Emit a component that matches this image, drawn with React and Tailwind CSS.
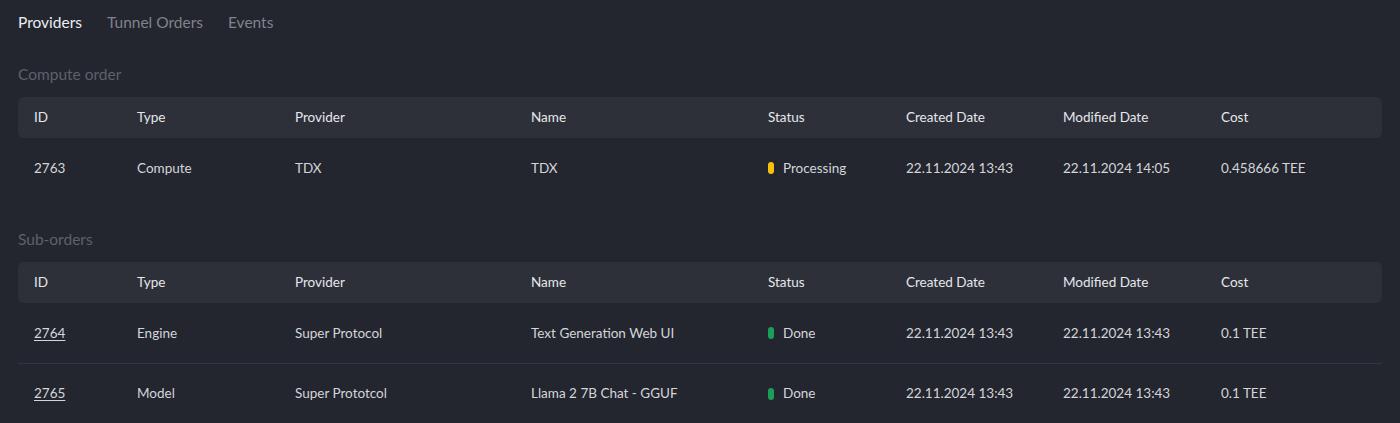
import React from "react";

const cols = ["w-[103px]", "w-[158px]", "w-[236px]", "w-[237px]", "w-[138px]", "w-[157px]", "w-[158px]", "flex-1"];
const heads = ["ID", "Type", "Provider", "Name", "Status", "Created Date", "Modified Date", "Cost"];

function Status({ color, label }) {
  return (
    <div className="flex items-center gap-[9px]">
      <span className={`inline-block w-[6px] h-[12px] rounded-full ${color}`} />
      <span>{label}</span>
    </div>
  );
}

function Header() {
  return (
    <div className="flex items-center h-[41px] bg-[#2d3039] rounded-[6px] pl-[16px] text-[13.5px] text-[#e6e7ea]">
      {heads.map((h, i) => (
        <div key={h} className={`${cols[i]} shrink-0`}>{h}</div>
      ))}
    </div>
  );
}

function Row({ cells, border }) {
  return (
    <div className={`flex items-center h-[60px] pl-[16px] text-[13.5px] text-[#d4d5d9] ${border ? "border-t border-[#343741]" : ""}`}>
      {cells.map((c, i) => (
        <div key={i} className={`${cols[i]} shrink-0`}>{c}</div>
      ))}
    </div>
  );
}

export default function App() {
  return (
    <div className="min-h-[423px] bg-[#23262e] px-[18px] pt-[12px] pb-4 font-['Lato',sans-serif] overflow-hidden">
      <div className="flex gap-[25px] text-[15.5px] leading-[20px]">
        <span className="text-[#eceef1]">Providers</span>
        <span className="text-[#80838b]">Tunnel Orders</span>
        <span className="text-[#80838b]">Events</span>
      </div>

      <div className="mt-[32px] text-[15.5px] leading-[20px] text-[#5e616a]">Compute order</div>
      <div className="mt-[13px]">
        <Header />
        <Row
          cells={[
            "2763",
            "Compute",
            "TDX",
            "TDX",
            <Status color="bg-[#f5c20e]" label="Processing" />,
            "22.11.2024 13:43",
            "22.11.2024 14:05",
            "0.458666 TEE",
          ]}
        />
      </div>

      <div className="mt-[31px] text-[15.5px] leading-[20px] text-[#5e616a]">Sub-orders</div>
      <div className="mt-[13px]">
        <Header />
        <Row
          cells={[
            <a className="underline underline-offset-2">2764</a>,
            "Engine",
            "Super Protocol",
            "Text Generation Web UI",
            <Status color="bg-[#1a9e5a]" label="Done" />,
            "22.11.2024 13:43",
            "22.11.2024 13:43",
            "0.1 TEE",
          ]}
        />
        <Row
          border
          cells={[
            <a className="underline underline-offset-2">2765</a>,
            "Model",
            "Super Prototcol",
            "Llama 2 7B Chat - GGUF",
            <Status color="bg-[#1a9e5a]" label="Done" />,
            "22.11.2024 13:43",
            "22.11.2024 13:43",
            "0.1 TEE",
          ]}
        />
      </div>
    </div>
  );
}
